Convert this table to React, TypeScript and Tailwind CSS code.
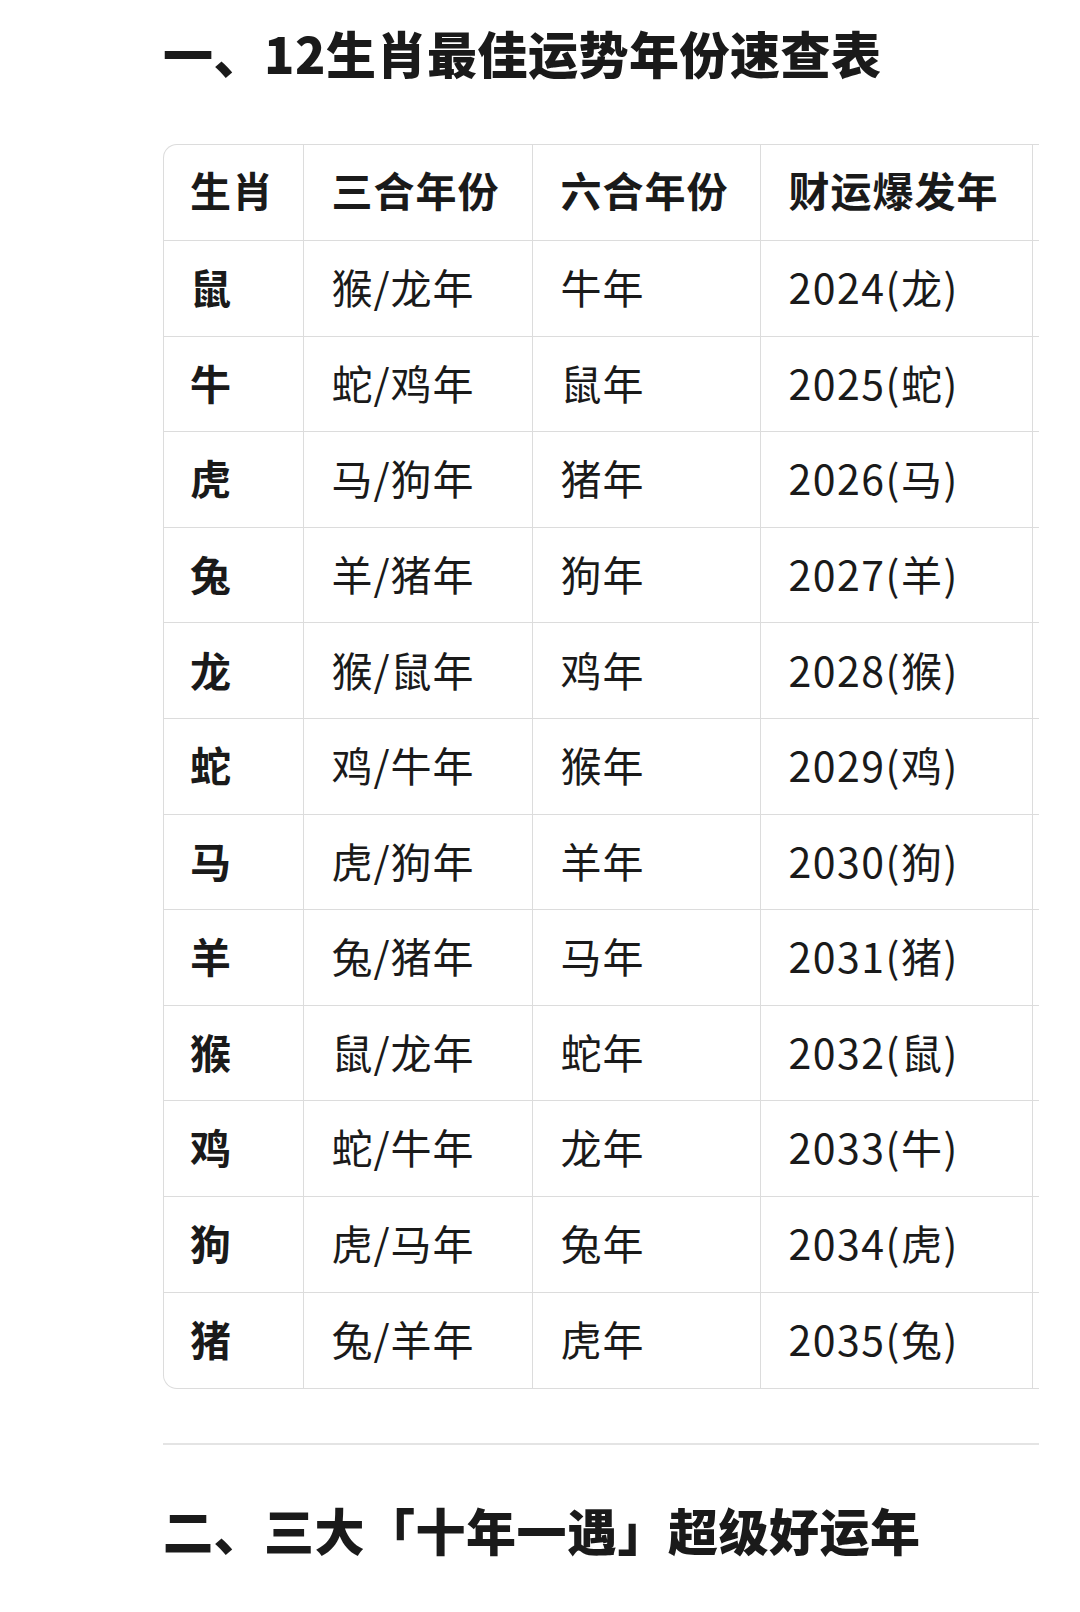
const rows = [
  ["鼠", "猴/龙年", "牛年", "2024(龙)"],
  ["牛", "蛇/鸡年", "鼠年", "2025(蛇)"],
  ["虎", "马/狗年", "猪年", "2026(马)"],
  ["兔", "羊/猪年", "狗年", "2027(羊)"],
  ["龙", "猴/鼠年", "鸡年", "2028(猴)"],
  ["蛇", "鸡/牛年", "猴年", "2029(鸡)"],
  ["马", "虎/狗年", "羊年", "2030(狗)"],
  ["羊", "兔/猪年", "马年", "2031(猪)"],
  ["猴", "鼠/龙年", "蛇年", "2032(鼠)"],
  ["鸡", "蛇/牛年", "龙年", "2033(牛)"],
  ["狗", "虎/马年", "兔年", "2034(虎)"],
  ["猪", "兔/羊年", "虎年", "2035(兔)"],
];

const headers = ["生肖", "三合年份", "六合年份", "财运爆发年", ""];

export default function App() {
  return (
    <div
      className="w-[1080px] min-h-[1612px] bg-white text-[#1a1a1a]"
      style={{ fontFamily: '"Noto Sans CJK SC", "Noto Sans", sans-serif' }}
    >
      <div className="pl-[163px] pr-[41px] pt-[22px]">
        {/* Section 1 title */}
        <h1 className="text-[50px] leading-[60px] font-black tracking-[0.5px] whitespace-nowrap">
          一、12生肖最佳运势年份速查表
        </h1>

        {/* Table */}
        <div className="mt-[62px] overflow-hidden rounded-l-[14px] border-y border-l border-[#dcdcdc]">
          <table className="table-fixed border-collapse w-[1080px]">
            <colgroup>
              <col className="w-[139px]" />
              <col className="w-[229px]" />
              <col className="w-[228px]" />
              <col className="w-[272px]" />
              <col className="w-[212px]" />
            </colgroup>
            <thead>
              <tr className="h-[95.6px]">
                {headers.map((h, i) => (
                  <th
                    key={i}
                    className={`text-left font-bold text-[41px] tracking-[1px] pb-[6px] border-[#dcdcdc] ${
                      i === 0 ? "pl-[26px]" : "pl-[28px] border-l"
                    }`}
                  >
                    {h}
                  </th>
                ))}
              </tr>
            </thead>
            <tbody>
              {rows.map((r) => (
                <tr key={r[0]} className="h-[95.6px] border-t border-[#dcdcdc]">
                  <td className="pl-[26px] pb-[3px] text-[41px] font-bold">{r[0]}</td>
                  <td className="pl-[28px] pb-[3px] text-[41px] tracking-[1px] border-l border-[#dcdcdc]">{r[1]}</td>
                  <td className="pl-[28px] pb-[3px] text-[41px] tracking-[1px] border-l border-[#dcdcdc]">{r[2]}</td>
                  <td className="pl-[28px] pb-[3px] text-[41px] tracking-[1.5px] border-l border-[#dcdcdc]">{r[3]}</td>
                  <td className="border-l border-[#dcdcdc]"></td>
                </tr>
              ))}
            </tbody>
          </table>
        </div>

        {/* Divider */}
        <div className="mt-[54px] h-[2px] bg-[#e4e4e4]" />

        {/* Section 2 title */}
        <h2 className="mt-[54px] text-[50px] leading-[60px] font-black tracking-[0.5px] whitespace-nowrap">
          二、三大「十年一遇」超级好运年
        </h2>
      </div>
    </div>
  );
}
